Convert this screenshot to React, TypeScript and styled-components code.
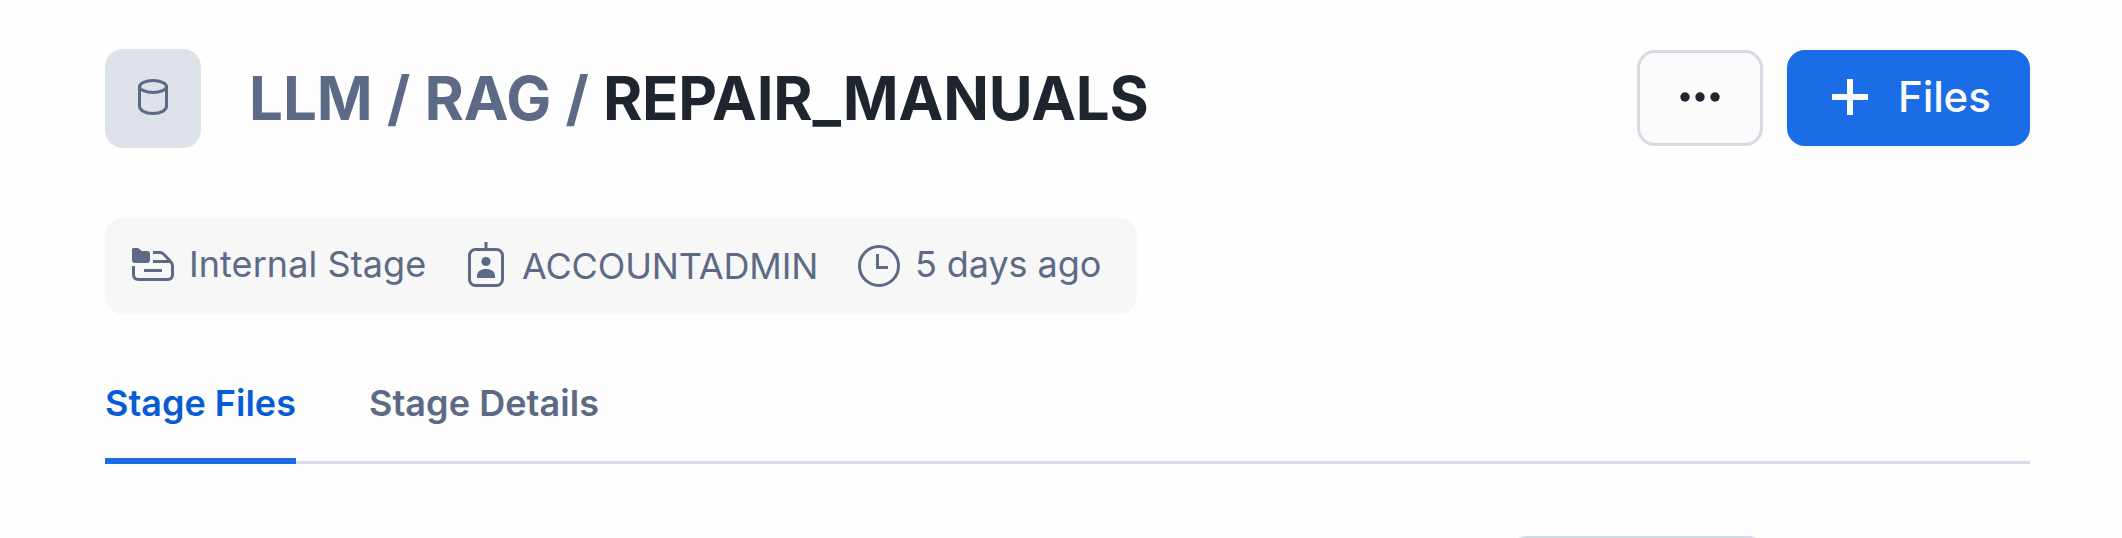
import React from 'react';
import styled, { createGlobalStyle } from 'styled-components';

const GlobalStyle = createGlobalStyle`
  * { box-sizing: border-box; }
  body {
    margin: 0;
    background: #fefefe;
    font-family: Inter, "Liberation Sans", sans-serif;
    overflow: hidden;
  }
`;

const Page = styled.main`
  display: flex;
  flex-direction: column;
  height: 538px;
  padding: 49px 92px 0 105px;
  overflow: hidden;

  & > * {
    flex: none;
  }
`;

const Header = styled.header`
  display: flex;
  align-items: center;
  height: 99px;
`;

const StageTile = styled.div`
  display: flex;
  align-items: center;
  justify-content: center;
  width: 96px;
  height: 99px;
  padding-bottom: 3px;
  border-radius: 18px;
  background: #dee3ea;
`;

const Title = styled.h1`
  flex: 1;
  margin: 0 0 1px 48px;
  font-size: 60px;
  font-weight: 700;
  line-height: 72px;
  letter-spacing: -0.2px;
  white-space: pre;
  color: #1e252f;
`;

const Crumb = styled.span`
  letter-spacing: 0;
  color: #5d6a85;
`;

const Actions = styled.div`
  display: flex;
  gap: 24px;
  margin-top: 1px;
  margin-bottom: 2px;
`;

const Button = styled.button<{ $primary?: boolean }>`
  display: flex;
  align-items: center;
  justify-content: ${(p) => (p.$primary ? 'flex-start' : 'center')};
  gap: 30px;
  width: ${(p) => (p.$primary ? 243 : 126)}px;
  height: 96px;
  padding: ${(p) => (p.$primary ? '0 0 2px 42px' : '0')};
  border: 3px solid ${(p) => (p.$primary ? '#1a6ce7' : '#d5dae4')};
  border-radius: 18px;
  background: ${(p) => (p.$primary ? '#1a6ce7' : '#fbfbfb')};
  color: ${(p) => (p.$primary ? '#fbfbfb' : '#1e252f')};
  font-family: inherit;
  font-size: 42px;
  font-weight: 500;
  line-height: 48px;
  letter-spacing: -0.1px;
`;

const Meta = styled.section`
  display: flex;
  align-items: center;
  width: 1032px;
  height: 96px;
  margin-top: 70px;
  padding-left: 24px;
  border-radius: 18px;
  background: #f7f7f7;
`;

const MetaItem = styled.div<{ $width: number; $lift?: number; $tracking: number }>`
  display: flex;
  align-items: center;
  gap: 12px;
  width: ${(p) => p.$width}px;
  color: #5d6a85;

  span {
    padding-bottom: ${(p) => p.$lift ?? 0}px;
    font-size: 36px;
    line-height: 48px;
    letter-spacing: ${(p) => p.$tracking}px;
    white-space: nowrap;
  }
`;

const Tabs = styled.nav`
  display: flex;
  gap: 73px;
  height: 150px;
  border-bottom: 3px solid #d5dae4;
`;

const Tab = styled.a<{ $active?: boolean }>`
  display: flex;
  align-items: flex-end;
  height: 150px;
  padding-bottom: ${(p) => (p.$active ? 31 : 37)}px;
  border-bottom: ${(p) => (p.$active ? '6px solid #1a6ce7' : 'none')};
  color: ${(p) => (p.$active ? '#085bd7' : '#5d6a85')};
  font-size: 36px;
  font-weight: 600;
  line-height: 48px;
  letter-spacing: ${(p) => (p.$active ? 0 : 0.07)}px;
  white-space: nowrap;
`;

const Toolbar = styled.div`
  display: flex;
  justify-content: flex-end;
  margin-top: 72px;
  padding-right: 264px;
`;

const FilterBox = styled.div`
  flex: none;
  width: 257px;
  height: 96px;
  border: 3px solid #d5dae4;
  border-radius: 18px;
`;

const Icon = styled.svg`
  flex: none;
  display: block;
  fill: none;
  stroke: currentColor;
  stroke-width: 3;
`;

const SolidIcon = styled(Icon)`
  fill: currentColor;
  stroke: none;
`;

const BoldIcon = styled(Icon)`
  stroke-width: 6;
`;

const DatabaseIcon = () => (
  <Icon width="36" height="36" viewBox="0 0 36 36" color="#5d6a85">
    <ellipse cx="18" cy="7.5" rx="13.5" ry="6" />
    <path d="M4.500 7.500V27c0 4.200 5.500 7.500 13.500 7.500S31.500 31.200 31.500 27V7.500" />
  </Icon>
);

const MoreIcon = () => (
  <SolidIcon width="42" height="12" viewBox="0 0 42 12">
    <circle cx="6" cy="5" r="4.700" />
    <circle cx="21" cy="5" r="4.700" />
    <circle cx="36" cy="5" r="4.700" />
  </SolidIcon>
);

const PlusIcon = () => (
  <BoldIcon width="36" height="36" viewBox="0 0 36 36">
    <path d="M18 0v36M0 18h36" />
  </BoldIcon>
);

const InternalStageIcon = () => (
  <Icon width="48" height="48" viewBox="0 0 48 48">
    <path
      d="M3 7.500Q3 6 4.500 6H8.500Q10 6 11 7.500L12.500 9H18Q21 9 21 12V18Q21 21 18 21H6Q3 21 3 18Z"
      fill="currentColor"
      stroke="none"
    />
    <path d="M24 10.500h7q2 0 3.500 1.500l7.500 8q1.500 1.800 1.500 4v8.500q0 5-5 5H9.500q-5 0-5-5V24" />
    <path d="M24 19.500h18M15 28.500h18" />
  </Icon>
);

const RoleIcon = () => (
  <Icon width="48" height="48" viewBox="0 0 48 48">
    <rect x="7.500" y="7.500" width="33" height="36" rx="6" />
    <path d="M24 0v8" />
    <g fill="currentColor" stroke="none">
      <circle cx="24" cy="19.500" r="4.600" />
      <path d="M15 36v-2c0-4.500 4-7 9-7s9 2.500 9 7v2Z" />
    </g>
  </Icon>
);

const ClockIcon = () => (
  <Icon width="48" height="48" viewBox="0 0 48 48">
    <circle cx="24" cy="24" r="19.500" />
    <path d="M22.500 12v13.500H33" />
  </Icon>
);

export default function App() {
  return (
    <>
      <GlobalStyle />
      <Page>
        <Header>
          <StageTile>
            <DatabaseIcon />
          </StageTile>
          <Title>
            <Crumb>LLM / RAG / </Crumb>REPAIR_MANUALS
          </Title>
          <Actions>
            <Button aria-label="More actions">
              <MoreIcon />
            </Button>
            <Button $primary>
              <PlusIcon />
              Files
            </Button>
          </Actions>
        </Header>
        <Meta>
          <MetaItem $width={333} $lift={4} $tracking={0.08}>
            <InternalStageIcon />
            <span>Internal Stage</span>
          </MetaItem>
          <MetaItem $width={393} $tracking={-0.15}>
            <RoleIcon />
            <span>ACCOUNTADMIN</span>
          </MetaItem>
          <MetaItem $width={258} $lift={4} $tracking={-0.08}>
            <ClockIcon />
            <span>5 days ago</span>
          </MetaItem>
        </Meta>
        <Tabs>
          <Tab $active>Stage Files</Tab>
          <Tab>Stage Details</Tab>
        </Tabs>
        <Toolbar>
          <FilterBox />
        </Toolbar>
      </Page>
    </>
  );
}
